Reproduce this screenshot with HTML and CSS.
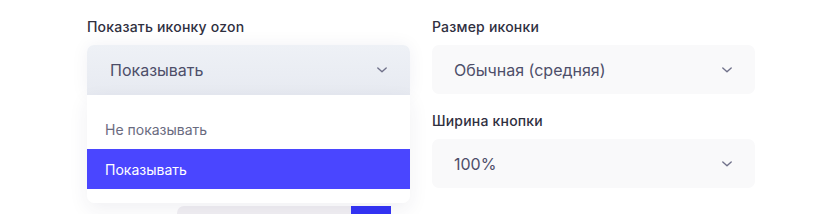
FILE: index.html
```html
<!DOCTYPE html>
<html lang="ru">
<head>
<meta charset="utf-8">
<link rel="stylesheet" href="styles.css">
</head>
<body>
<div class="page">
  <div class="col">
    <div class="field">
      <div class="label">Показать иконку ozon</div>
      <div class="select-wrap">
        <div class="select select-open">
          <span class="value">Показывать</span>
          <svg class="chev" width="12" height="8" viewBox="0 0 12 8"><path d="M1.8 2 6 5.8 10.2 2" fill="none" stroke="#70718a" stroke-width="1.4" stroke-linecap="round" stroke-linejoin="round"/></svg>
        </div>
        <div class="menu">
          <div class="opt">Не показывать</div>
          <div class="opt opt-active">Показывать</div>
        </div>
      </div>
    </div>
    <div class="under">
      <div class="under-gap"></div>
      <div class="under-input"></div>
      <div class="under-btn"></div>
    </div>
  </div>
  <div class="col">
    <div class="field">
      <div class="label">Размер иконки</div>
      <div class="select">
        <span class="value">Обычная (средняя)</span>
        <svg class="chev" width="12" height="8" viewBox="0 0 12 8"><path d="M1.8 2 6 5.8 10.2 2" fill="none" stroke="#70718a" stroke-width="1.4" stroke-linecap="round" stroke-linejoin="round"/></svg>
      </div>
    </div>
    <div class="field field-second">
      <div class="label">Ширина кнопки</div>
      <div class="select">
        <span class="value">100%</span>
        <svg class="chev" width="12" height="8" viewBox="0 0 12 8"><path d="M1.8 2 6 5.8 10.2 2" fill="none" stroke="#70718a" stroke-width="1.4" stroke-linecap="round" stroke-linejoin="round"/></svg>
      </div>
    </div>
  </div>
</div>
</body>
</html>
```

FILE: styles.css
```css
html, body {
  margin: 0;
  padding: 0;
  background: #ffffff;
  overflow: hidden;
}
body {
  font-family: Inter, "Noto Sans", sans-serif;
  width: 835px;
  height: 214px;
}
.page {
  display: grid;
  grid-template-columns: 323px 323px;
  column-gap: 22px;
  padding: 18px 0 0 87px;
}
.col {
  display: flex;
  flex-direction: column;
}
.field {
  display: flex;
  flex-direction: column;
  gap: 9px;
}
.field-second {
  margin-top: 18px;
}
.label {
  font-size: 14px;
  line-height: 18px;
  font-weight: 500;
  letter-spacing: 0.2px;
  color: #30303f;
}
.select-wrap {
  position: relative;
  z-index: 2;
}
.select {
  height: 50px;
  border-radius: 7px;
  background: #f9f9fa;
  display: flex;
  align-items: center;
  justify-content: space-between;
  padding: 0 22px 0 22px;
  box-sizing: border-box;
}
.col:last-child .select {
  height: 49px;
}
.select-open {
  background: linear-gradient(#eef1f6, #e7eaf1);
  border-radius: 7px 7px 0 0;
  padding-left: 23px;
  box-shadow: 0 0 18px rgba(40, 40, 80, 0.06);
}
.value {
  font-size: 16px;
  line-height: 20px;
  color: #4d4e69;
}
.chev {
  display: block;
}
.menu {
  position: absolute;
  left: 0;
  right: 0;
  top: 50px;
  background: #ffffff;
  border-radius: 0 0 7px 7px;
  padding: 14px 0 14px;
  box-shadow: 0 6px 20px rgba(40, 40, 80, 0.07);
}
.opt {
  height: 40px;
  display: flex;
  align-items: center;
  padding-left: 18px;
  font-size: 14px;
  color: #6a6b80;
}
.opt-active {
  background: #4a46ff;
  color: #ffffff;
}
.under {
  display: flex;
  margin-top: 111px;
  height: 8px;
}
.under-gap {
  width: 90px;
}
.under-input {
  width: 174px;
  background: #f1eff3;
  border-radius: 7px 0 0 0;
}
.under-btn {
  width: 40px;
  background: #3333f6;
}
```
